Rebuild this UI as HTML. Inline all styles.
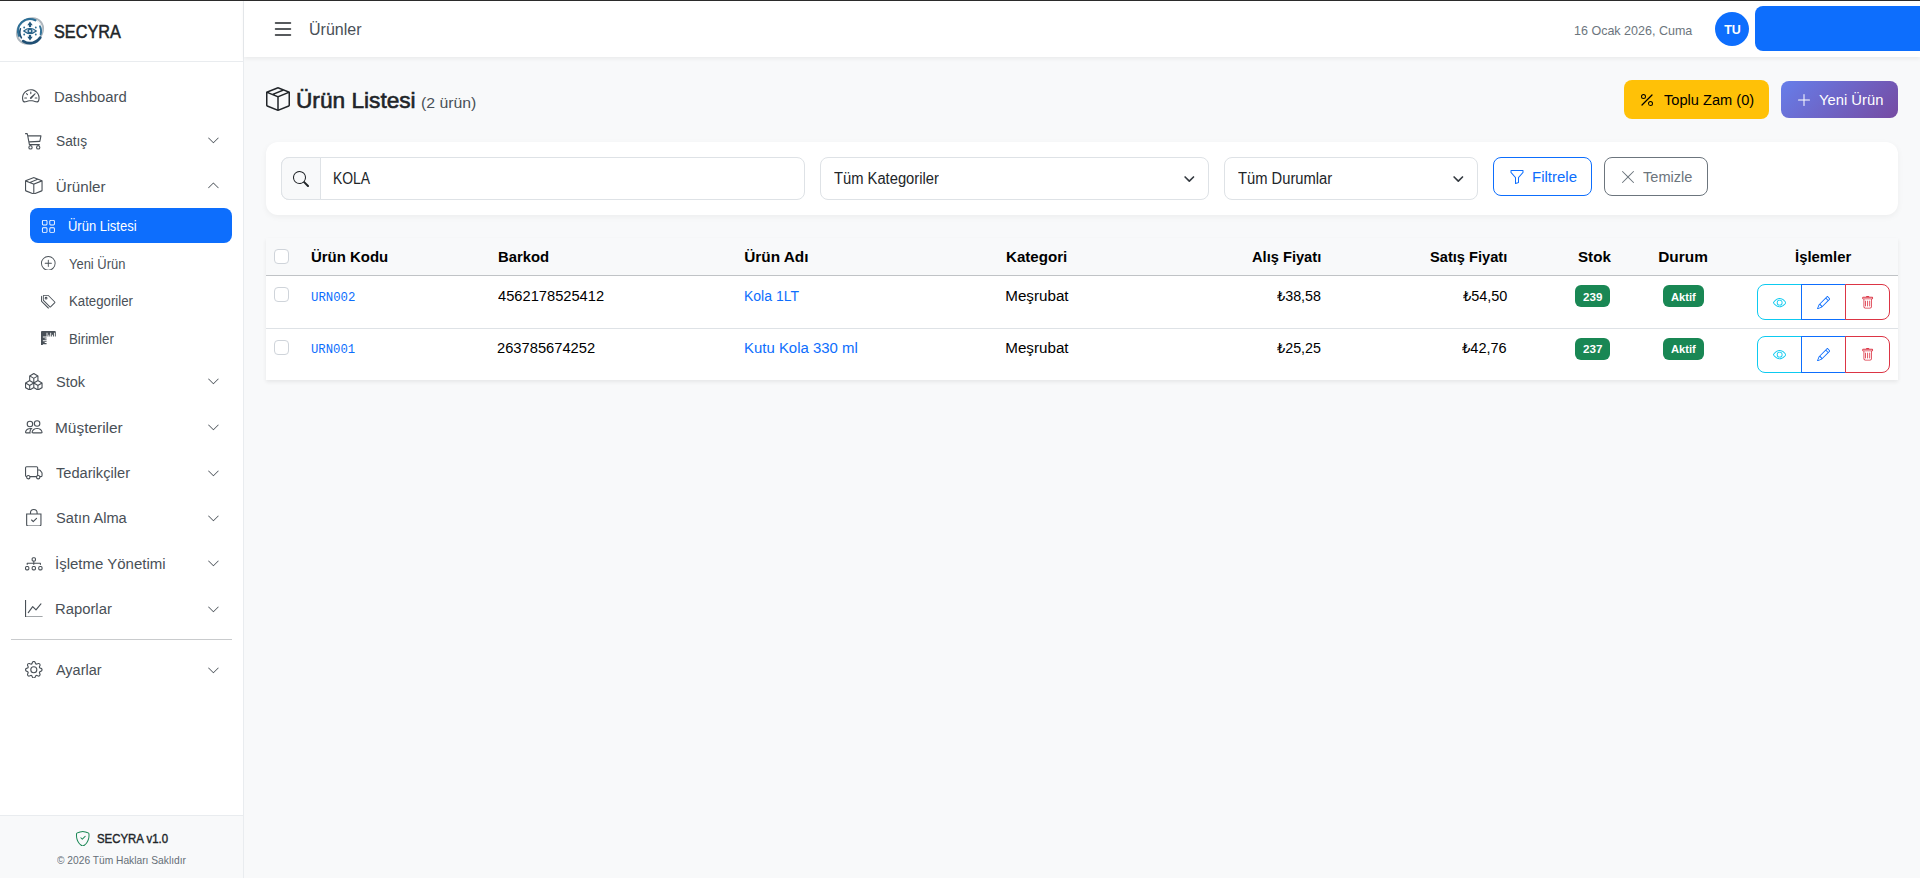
<!DOCTYPE html>
<html lang="tr"><head><meta charset="utf-8"><title>SECYRA - Ürün Listesi</title>
<style>
*{box-sizing:border-box}
html,body{margin:0;padding:0}
body{width:1920px;height:878px;overflow:hidden;position:relative;background:#f8f9fa;font-family:"Liberation Sans","DejaVu Sans",sans-serif;}
.a{position:absolute}
.i{position:absolute;display:block}
.t{position:absolute;white-space:nowrap;line-height:1;margin:0;padding:0;transform-origin:0 0}
.mono{font-family:"Liberation Mono","DejaVu Sans Mono",monospace}
.badge{position:absolute;background:#198754;border-radius:6px;height:22px}
.lira{font-size:.9em}
.cb{position:absolute;width:15px;height:15px;border:1px solid #cfd4da;border-radius:4px;background:#fff}
.ab{position:absolute;height:36px;width:45px;background:#fff;border:1px solid}
</style></head><body>

<div class="a" style="left:0;top:0;width:244px;height:878px;background:#fff;border-right:1px solid #e9ecef"></div>
<div class="a" style="left:0;top:61px;width:243px;height:1px;background:#e9ecef"></div>
<div class="a" style="left:0;top:815px;width:243px;height:63px;background:#f8f9fa;border-top:1px solid #e9ecef"></div>
<div class="a" style="left:11px;top:639px;width:221px;height:1px;background:#c9cbcd"></div>
<div class="a" style="left:30px;top:208px;width:202px;height:35px;background:#0d6efd;border-radius:8px"></div>
<div class="a" style="left:244px;top:0;width:1676px;height:57px;background:#fff;box-shadow:0 2px 4px rgba(0,0,0,.06)"></div>
<div class="a" style="left:0;top:0;width:1920px;height:1px;background:#2b2b2b"></div>
<div class="a" style="left:1715px;top:12px;width:34px;height:34px;border-radius:50%;background:#0d6efd"></div>
<div class="a" style="left:1755px;top:6px;width:175px;height:45px;border-radius:8px;background:#0d6efd"></div>
<div class="a" style="left:1624px;top:80px;width:145px;height:39px;border-radius:8px;background:#ffc107"></div>
<div class="a" style="left:1781px;top:81px;width:117px;height:37px;border-radius:8px;background:linear-gradient(135deg,#667eea 0%,#764ba2 100%)"></div>
<div class="a" style="left:266px;top:142px;width:1632px;height:73px;border-radius:12px;background:#fff;box-shadow:0 2px 6px rgba(0,0,0,.05)"></div>
<div class="a" style="left:281px;top:157px;width:524px;height:43px;border:1px solid #dee2e6;border-radius:8px;background:#fff"></div>
<div class="a" style="left:281px;top:157px;width:40px;height:43px;border:1px solid #dee2e6;border-radius:8px 0 0 8px;background:#f8f9fa"></div>
<div class="a" style="left:820px;top:157px;width:389px;height:43px;border:1px solid #dee2e6;border-radius:8px;background:#fff"></div>
<div class="a" style="left:1224px;top:157px;width:254px;height:43px;border:1px solid #dee2e6;border-radius:8px;background:#fff"></div>
<div class="a" style="left:1493px;top:157px;width:99px;height:39px;border:1px solid #0d6efd;border-radius:8px;background:#fff"></div>
<div class="a" style="left:1604px;top:157px;width:104px;height:39px;border:1px solid #6c757d;border-radius:8px;background:#fff"></div>
<svg class="i" style="left:1181.4px;top:170.5px" width="16" height="16" viewBox="0 0 16 16" fill="none" stroke="#343a40" stroke-width="1.650" stroke-linecap="round" stroke-linejoin="round"><path d="M4.100 6 8.300 10.100 12.500 6"/></svg>
<svg class="i" style="left:1450.4px;top:170.5px" width="16" height="16" viewBox="0 0 16 16" fill="none" stroke="#343a40" stroke-width="1.650" stroke-linecap="round" stroke-linejoin="round"><path d="M4.100 6 8.300 10.100 12.500 6"/></svg>
<div class="a" style="left:266px;top:238px;width:1632px;height:142px;background:#fff;box-shadow:0 2px 4px rgba(0,0,0,.075)"></div>
<div class="a" style="left:266px;top:238px;width:1632px;height:37px;background:#f8f9fa"></div>
<div class="a" style="left:266px;top:275px;width:1632px;height:1px;background:#c0c3c6"></div>
<div class="a" style="left:266px;top:328px;width:1632px;height:1px;background:#dee2e6"></div>
<div class="cb" style="left:274px;top:249px"></div>
<div class="cb" style="left:274px;top:287px"></div>
<div class="cb" style="left:274px;top:340px"></div>
<div class="badge" style="left:1575px;top:285px;width:35px"></div>
<div class="badge" style="left:1663px;top:285px;width:41px"></div>
<div class="badge" style="left:1575px;top:338px;width:35px"></div>
<div class="badge" style="left:1663px;top:338px;width:41px"></div>
<div class="ab" style="left:1757px;top:284px;height:36px;border-color:#0dcaf0;border-radius:8px 0 0 8px"></div>
<div class="ab" style="left:1801px;top:284px;height:36px;border-color:#0d6efd"></div>
<div class="ab" style="left:1845px;top:284px;height:36px;border-color:#dc3545;border-radius:0 8px 8px 0"></div>
<svg class="i" style="left:1772.5px;top:295.75px" width="13.3" height="13.3" viewBox="0 0 16 16" fill="#0dcaf0"><path d="M16 8s-3-5.5-8-5.5S0 8 0 8s3 5.5 8 5.5S16 8 16 8M1.173 8a13 13 0 0 1 1.66-2.043C4.12 4.668 5.88 3.5 8 3.5s3.879 1.168 5.168 2.457A13 13 0 0 1 14.828 8q-.086.13-.195.288c-.335.48-.83 1.12-1.465 1.755C11.879 11.332 10.119 12.5 8 12.5s-3.879-1.168-5.168-2.457A13 13 0 0 1 1.172 8z"/><path d="M8 5.5a2.5 2.5 0 1 0 0 5 2.5 2.5 0 0 0 0-5M4.5 8a3.5 3.5 0 1 1 7 0 3.5 3.5 0 0 1-7 0"/></svg>
<svg class="i" style="left:1816.7px;top:295.8px" width="13.3" height="13.3" viewBox="0 0 16 16" fill="#0d6efd"><path d="M12.146.146a.5.5 0 0 1 .708 0l3 3a.5.5 0 0 1 0 .708l-10 10a.5.5 0 0 1-.168.11l-5 2a.5.5 0 0 1-.65-.65l2-5a.5.5 0 0 1 .11-.168zM11.207 2.5 13.5 4.793 14.793 3.5 12.5 1.207zm1.586 3L10.5 3.207 4 9.707V10h.5a.5.5 0 0 1 .5.5v.5h.5a.5.5 0 0 1 .5.5v.5h.293zm-9.761 5.175-.106.106-1.528 3.821 3.821-1.528.106-.106A.5.5 0 0 1 5 12.5V12h-.5a.5.5 0 0 1-.5-.5V11h-.5a.5.5 0 0 1-.468-.325"/></svg>
<svg class="i" style="left:1860.85px;top:296px" width="13.3" height="13.3" viewBox="0 0 16 16" fill="#dc3545"><path d="M5.5 5.5A.5.5 0 0 1 6 6v6a.5.5 0 0 1-1 0V6a.5.5 0 0 1 .5-.5m2.5 0a.5.5 0 0 1 .5.5v6a.5.5 0 0 1-1 0V6a.5.5 0 0 1 .5-.5m3 .5a.5.5 0 0 0-1 0v6a.5.5 0 0 0 1 0z"/><path d="M14.5 3a1 1 0 0 1-1 1H13v9a2 2 0 0 1-2 2H5a2 2 0 0 1-2-2V4h-.5a1 1 0 0 1-1-1V2a1 1 0 0 1 1-1H6a1 1 0 0 1 1-1h2a1 1 0 0 1 1 1h3.5a1 1 0 0 1 1 1zM4.118 4 4 4.059V13a1 1 0 0 0 1 1h6a1 1 0 0 0 1-1V4.059L11.882 4zM2.5 3h11V2h-11z"/></svg>
<div class="ab" style="left:1757px;top:336px;height:37px;border-color:#0dcaf0;border-radius:8px 0 0 8px"></div>
<div class="ab" style="left:1801px;top:336px;height:37px;border-color:#0d6efd"></div>
<div class="ab" style="left:1845px;top:336px;height:37px;border-color:#dc3545;border-radius:0 8px 8px 0"></div>
<svg class="i" style="left:1772.5px;top:347.75px" width="13.3" height="13.3" viewBox="0 0 16 16" fill="#0dcaf0"><path d="M16 8s-3-5.5-8-5.5S0 8 0 8s3 5.5 8 5.5S16 8 16 8M1.173 8a13 13 0 0 1 1.66-2.043C4.12 4.668 5.88 3.5 8 3.5s3.879 1.168 5.168 2.457A13 13 0 0 1 14.828 8q-.086.13-.195.288c-.335.48-.83 1.12-1.465 1.755C11.879 11.332 10.119 12.5 8 12.5s-3.879-1.168-5.168-2.457A13 13 0 0 1 1.172 8z"/><path d="M8 5.5a2.5 2.5 0 1 0 0 5 2.5 2.5 0 0 0 0-5M4.5 8a3.5 3.5 0 1 1 7 0 3.5 3.5 0 0 1-7 0"/></svg>
<svg class="i" style="left:1816.7px;top:347.8px" width="13.3" height="13.3" viewBox="0 0 16 16" fill="#0d6efd"><path d="M12.146.146a.5.5 0 0 1 .708 0l3 3a.5.5 0 0 1 0 .708l-10 10a.5.5 0 0 1-.168.11l-5 2a.5.5 0 0 1-.65-.65l2-5a.5.5 0 0 1 .11-.168zM11.207 2.5 13.5 4.793 14.793 3.5 12.5 1.207zm1.586 3L10.5 3.207 4 9.707V10h.5a.5.5 0 0 1 .5.5v.5h.5a.5.5 0 0 1 .5.5v.5h.293zm-9.761 5.175-.106.106-1.528 3.821 3.821-1.528.106-.106A.5.5 0 0 1 5 12.5V12h-.5a.5.5 0 0 1-.5-.5V11h-.5a.5.5 0 0 1-.468-.325"/></svg>
<svg class="i" style="left:1860.85px;top:348px" width="13.3" height="13.3" viewBox="0 0 16 16" fill="#dc3545"><path d="M5.5 5.5A.5.5 0 0 1 6 6v6a.5.5 0 0 1-1 0V6a.5.5 0 0 1 .5-.5m2.5 0a.5.5 0 0 1 .5.5v6a.5.5 0 0 1-1 0V6a.5.5 0 0 1 .5-.5m3 .5a.5.5 0 0 0-1 0v6a.5.5 0 0 0 1 0z"/><path d="M14.5 3a1 1 0 0 1-1 1H13v9a2 2 0 0 1-2 2H5a2 2 0 0 1-2-2V4h-.5a1 1 0 0 1-1-1V2a1 1 0 0 1 1-1H6a1 1 0 0 1 1-1h2a1 1 0 0 1 1 1h3.5a1 1 0 0 1 1 1zM4.118 4 4 4.059V13a1 1 0 0 0 1 1h6a1 1 0 0 0 1-1V4.059L11.882 4zM2.5 3h11V2h-11z"/></svg>
<svg class="i" style="left:270.5px;top:16.5px" width="24" height="24" viewBox="0 0 16 16" fill="#212529"><path fill-rule="evenodd" d="M2.5 12a.5.5 0 0 1 .5-.5h10a.5.5 0 0 1 0 1H3a.5.5 0 0 1-.5-.5m0-4a.5.5 0 0 1 .5-.5h10a.5.5 0 0 1 0 1H3a.5.5 0 0 1-.5-.5m0-4a.5.5 0 0 1 .5-.5h10a.5.5 0 0 1 0 1H3a.5.5 0 0 1-.5-.5"/></svg>
<svg class="i" style="left:22.3px;top:86.8px" width="17.6" height="17.6" viewBox="0 0 16 16" fill="#495057"><path d="M8 4a.5.5 0 0 1 .5.5V6a.5.5 0 0 1-1 0V4.500A.5.5 0 0 1 8 4M3.732 5.732a.5.5 0 0 1 .707 0l.915.914a.5.5 0 1 1-.708.708l-.914-.915a.5.5 0 0 1 0-.707M2 10a.5.5 0 0 1 .5-.5h1.586a.5.5 0 0 1 0 1H2.5A.5.5 0 0 1 2 10m9.500 0a.5.5 0 0 1 .5-.5h1.500a.5.5 0 0 1 0 1H12a.5.5 0 0 1-.5-.5m.754-4.246a.39.39 0 0 0-.527-.02L7.547 9.310a.91.91 0 1 0 1.302 1.258l3.434-4.297a.39.39 0 0 0-.029-.518z"/><path fill-rule="evenodd" d="M0 10a8 8 0 1 1 15.547 2.661c-.442 1.253-1.845 1.602-2.932 1.250C11.309 13.488 9.475 13 8 13c-1.474 0-3.310.488-4.615.911-1.087.352-2.490.003-2.932-1.250A8 8 0 0 1 0 10m8-7a7 7 0 0 0-6.603 9.329c.203.575.923.876 1.680.630C4.397 12.533 6.358 12 8 12s3.604.532 4.923.960c.757.245 1.477-.056 1.680-.631A7 7 0 0 0 8 3"/></svg>
<svg class="i" style="left:25.3px;top:132px" width="17.6" height="17.6" viewBox="0 0 16 16" fill="#495057"><path d="M0 1.5A.5.5 0 0 1 .5 1H2a.5.5 0 0 1 .485.379L2.89 3H14.5a.5.5 0 0 1 .49.598l-1 5a.5.5 0 0 1-.465.401l-9.397.472L4.415 11H13a.5.5 0 0 1 0 1H4a.5.5 0 0 1-.491-.408L2.01 3.607 1.61 2H.5a.5.5 0 0 1-.5-.5M3.102 4l.84 4.479 9.144-.459L13.89 4zM5 12a2 2 0 1 0 0 4 2 2 0 0 0 0-4m7 0a2 2 0 1 0 0 4 2 2 0 0 0 0-4m-7 1a1 1 0 1 1 0 2 1 1 0 0 1 0-2m7 0a1 1 0 1 1 0 2 1 1 0 0 1 0-2"/></svg>
<svg class="i" style="left:25.3px;top:176.7px" width="17.6" height="17.6" viewBox="0 0 16 16" fill="#495057"><path d="M8.186 1.113a.5.5 0 0 0-.372 0L1.846 3.5l2.404.961L10.404 2zm3.564 1.426L5.596 5 8 5.961 14.154 3.5zm3.250 1.700-6.500 2.600v7.922l6.500-2.600V4.240zM7.500 14.762V6.838L1 4.239v7.923zM7.443.184a1.500 1.500 0 0 1 1.114 0l7.129 2.852A.5.5 0 0 1 16 3.500v8.662a1 1 0 0 1-.629.928l-7.185 2.874a.5.5 0 0 1-.372 0L.630 13.090a1 1 0 0 1-.630-.928V3.500a.5.5 0 0 1 .314-.464z"/></svg>
<svg class="i" style="left:41px;top:218.7px" width="14.8" height="14.8" viewBox="0 0 16 16" fill="#fff"><path d="M1 2.500A1.500 1.500 0 0 1 2.500 1h3A1.500 1.500 0 0 1 7 2.500v3A1.500 1.500 0 0 1 5.500 7h-3A1.500 1.500 0 0 1 1 5.500zM2.500 2a.5.5 0 0 0-.5.5v3a.5.5 0 0 0 .5.5h3a.5.5 0 0 0 .5-.5v-3a.5.5 0 0 0-.5-.5zm6.500.5A1.500 1.500 0 0 1 10.500 1h3A1.500 1.500 0 0 1 15 2.500v3A1.500 1.500 0 0 1 13.500 7h-3A1.500 1.500 0 0 1 9 5.500zm1.500-.5a.5.5 0 0 0-.5.5v3a.5.5 0 0 0 .5.5h3a.5.5 0 0 0 .5-.5v-3a.5.5 0 0 0-.5-.5zM1 10.500A1.500 1.500 0 0 1 2.500 9h3A1.500 1.500 0 0 1 7 10.500v3A1.500 1.500 0 0 1 5.500 15h-3A1.500 1.500 0 0 1 1 13.500zm1.500-.5a.5.5 0 0 0-.5.5v3a.5.5 0 0 0 .5.5h3a.5.5 0 0 0 .5-.5v-3a.5.5 0 0 0-.5-.5zm6.500.5A1.500 1.500 0 0 1 10.500 9h3a1.500 1.500 0 0 1 1.500 1.500v3a1.500 1.500 0 0 1-1.500 1.500h-3A1.500 1.500 0 0 1 9 13.500zm1.500-.5a.5.5 0 0 0-.5.5v3a.5.5 0 0 0 .5.5h3a.5.5 0 0 0 .5-.5v-3a.5.5 0 0 0-.5-.5z"/></svg>
<svg class="i" style="left:41px;top:255.9px" width="14.6" height="14.6" viewBox="0 0 16 16" fill="#495057"><path d="M8 15A7 7 0 1 1 8 1a7 7 0 0 1 0 14m0 1A8 8 0 1 0 8 0a8 8 0 0 0 0 16"/><path d="M8 4a.5.5 0 0 1 .5.5v3h3a.5.5 0 0 1 0 1h-3v3a.5.5 0 0 1-1 0v-3h-3a.5.5 0 0 1 0-1h3v-3A.5.5 0 0 1 8 4"/></svg>
<svg class="i" style="left:41px;top:293.9px" width="14.8" height="14.8" viewBox="0 0 16 16" fill="#495057"><path d="M3 2v4.586l7 7L14.586 9l-7-7zM2 2a1 1 0 0 1 1-1h4.586a1 1 0 0 1 .707.293l7 7a1 1 0 0 1 0 1.414l-4.586 4.586a1 1 0 0 1-1.414 0l-7-7A1 1 0 0 1 2 6.586z"/><path d="M5.500 5a.5.5 0 1 1 0-1 .5.5 0 0 1 0 1m0 1a1.500 1.500 0 1 0 0-3 1.500 1.500 0 0 0 0 3M1 7.086a1 1 0 0 0 .293.707L8.750 15.250l-.043.043a1 1 0 0 1-1.414 0l-7-7A1 1 0 0 1 0 7.586V3a1 1 0 0 1 1-1z"/></svg>
<svg class="i" style="left:41px;top:330.6px" width="14.8" height="14.8" viewBox="0 0 16 16" fill="#495057"><path d="M1 0a1 1 0 0 0-1 1v14a1 1 0 0 0 1 1h5v-1H2v-1h4v-1H4v-1h2v-1H2v-1h4V9H4V8h2V7H2V6h4V2h1v4h1V4h1v2h1V2h1v4h1V4h1v2h1V2h1v4h1V1a1 1 0 0 0-1-1z"/></svg>
<svg class="i" style="left:25.3px;top:372.9px" width="17.6" height="17.6" viewBox="0 0 16 16" fill="#495057"><path d="M7.752.066a.5.5 0 0 1 .496 0l3.750 2.143a.5.5 0 0 1 .252.434v3.995l3.498 2A.5.5 0 0 1 16 9.070v4.286a.5.5 0 0 1-.252.434l-3.750 2.143a.5.5 0 0 1-.496 0l-3.502-2-3.502 2.001a.5.5 0 0 1-.496 0l-3.750-2.143A.5.5 0 0 1 0 13.357V9.071a.5.5 0 0 1 .252-.434L3.750 6.638V2.643a.5.5 0 0 1 .252-.434zM4.250 7.504 1.508 9.071l2.742 1.567 2.742-1.567zM7.500 9.933l-2.750 1.571v3.134l2.750-1.571zm1 3.134 2.750 1.571v-3.134L8.500 9.933zm.508-3.996 2.742 1.567 2.742-1.567-2.742-1.567zm2.242-2.433V3.504L8.500 5.076V8.210zM7.500 8.210V5.076L4.750 3.504v3.134zM5.258 2.643 8 4.210l2.742-1.567L8 1.076zM15 9.933l-2.750 1.571v3.134L15 13.067zM3.750 14.638v-3.134L1 9.933v3.134z"/></svg>
<svg class="i" style="left:25.3px;top:418.2px" width="17.6" height="17.6" viewBox="0 0 16 16" fill="#495057"><path d="M15 14s1 0 1-1-1-4-5-4-5 3-5 4 1 1 1 1zm-7.978-1L7 12.996c.001-.264.167-1.030.760-1.720C8.312 10.629 9.282 10 11 10c1.717 0 2.687.630 3.240 1.276.593.690.758 1.457.760 1.720l-.008.002-.014.002zM11 7a2 2 0 1 0 0-4 2 2 0 0 0 0 4m3-2a3 3 0 1 1-6 0 3 3 0 0 1 6 0M6.936 9.280a6 6 0 0 0-1.230-.247A7 7 0 0 0 5 9c-4 0-5 3-5 4q0 1 1 1h4.216A2.240 2.240 0 0 1 5 13c0-1.010.377-2.042 1.090-2.904.243-.294.526-.569.846-.816M4.920 10A5.500 5.500 0 0 0 4 13H1c0-.260.164-1.030.760-1.724.545-.636 1.492-1.256 3.160-1.275ZM1.500 5.500a3 3 0 1 1 6 0 3 3 0 0 1-6 0m3-2a2 2 0 1 0 0 4 2 2 0 0 0 0-4"/></svg>
<svg class="i" style="left:25.3px;top:463.8px" width="17.6" height="17.6" viewBox="0 0 16 16" fill="#495057"><path d="M0 3.500A1.500 1.500 0 0 1 1.500 2h9A1.500 1.500 0 0 1 12 3.500V5h1.020a1.500 1.500 0 0 1 1.170.563l1.481 1.850a1.500 1.500 0 0 1 .329.938V10.500a1.500 1.500 0 0 1-1.500 1.500H14a2 2 0 1 1-4 0H5a2 2 0 1 1-3.998-.085A1.500 1.500 0 0 1 0 10.500zm1.294 7.456A2 2 0 0 1 4.732 11h5.536a2 2 0 0 1 .732-.732V3.500a.5.5 0 0 0-.5-.5h-9a.5.5 0 0 0-.5.500v7a.5.5 0 0 0 .294.456M12 10a2 2 0 0 1 1.732 1h.768a.5.5 0 0 0 .5-.5V8.350a.5.5 0 0 0-.110-.312l-1.480-1.850A.5.5 0 0 0 13.020 6H12zm-9 1a1 1 0 1 0 0 2 1 1 0 0 0 0-2m9 0a1 1 0 1 0 0 2 1 1 0 0 0 0-2"/></svg>
<svg class="i" style="left:25.3px;top:508.5px" width="17.6" height="17.6" viewBox="0 0 16 16" fill="#495057"><path fill-rule="evenodd" d="M10.854 8.146a.5.5 0 0 1 0 .708l-3 3a.5.5 0 0 1-.708 0l-1.500-1.500a.5.5 0 0 1 .708-.708L7.500 10.793l2.646-2.647a.5.5 0 0 1 .708 0"/><path d="M8 1a2.500 2.500 0 0 1 2.500 2.500V4h-5v-.5A2.500 2.500 0 0 1 8 1m3.500 3v-.5a3.500 3.500 0 1 0-7 0V4H1v10a2 2 0 0 0 2 2h10a2 2 0 0 0 2-2V4zM2 5h12v9a1 1 0 0 1-1 1H3a1 1 0 0 1-1-1z"/></svg>
<svg class="i" style="left:25.3px;top:554.7px" width="17.6" height="17.6" viewBox="0 0 16 16" fill="#495057"><path fill-rule="evenodd" d="M6 3.500A1.500 1.500 0 0 1 7.500 2h1A1.500 1.500 0 0 1 10 3.500v1A1.500 1.500 0 0 1 8.500 6v1H14a.5.5 0 0 1 .5.5v1a.5.5 0 0 1-1 0V8h-5v.5a.5.5 0 0 1-1 0V8h-5v.5a.5.5 0 0 1-1 0v-1A.5.5 0 0 1 2 7h5.500V6A1.500 1.500 0 0 1 6 4.500zM8.500 5a.5.5 0 0 0 .5-.5v-1a.5.5 0 0 0-.5-.5h-1a.5.5 0 0 0-.5.5v1a.5.5 0 0 0 .5.5zM0 11.500A1.500 1.500 0 0 1 1.500 10h1A1.500 1.500 0 0 1 4 11.500v1A1.500 1.500 0 0 1 2.500 14h-1A1.500 1.500 0 0 1 0 12.500zm1.500-.5a.5.5 0 0 0-.5.5v1a.5.5 0 0 0 .5.5h1a.5.5 0 0 0 .5-.5v-1a.5.5 0 0 0-.5-.5zm4.500.5A1.500 1.500 0 0 1 7.500 10h1a1.500 1.500 0 0 1 1.500 1.500v1A1.500 1.500 0 0 1 8.500 14h-1A1.500 1.500 0 0 1 6 12.500zm1.500-.5a.5.5 0 0 0-.5.5v1a.5.5 0 0 0 .5.5h1a.5.5 0 0 0 .5-.5v-1a.5.5 0 0 0-.5-.5zm4.500.5a1.500 1.500 0 0 1 1.500-1.500h1a1.500 1.500 0 0 1 1.500 1.500v1a1.500 1.500 0 0 1-1.500 1.500h-1a1.500 1.500 0 0 1-1.500-1.500zm1.500-.5a.5.5 0 0 0-.5.5v1a.5.5 0 0 0 .5.5h1a.5.5 0 0 0 .5-.5v-1a.5.5 0 0 0-.5-.5z"/></svg>
<svg class="i" style="left:25.3px;top:599.7px" width="17.6" height="17.6" viewBox="0 0 16 16" fill="#495057"><path fill-rule="evenodd" d="M0 0h1v15h15v1H0zm14.817 3.113a.5.5 0 0 1 .070.704l-4.500 5.500a.5.5 0 0 1-.740.037L7.060 6.767l-3.656 5.027a.5.5 0 0 1-.808-.588l4-5.500a.5.5 0 0 1 .758-.060l2.609 2.610 4.150-5.073a.5.5 0 0 1 .704-.070"/></svg>
<svg class="i" style="left:25.3px;top:660.7px" width="17.6" height="17.6" viewBox="0 0 16 16" fill="#495057"><path d="M8 4.754a3.246 3.246 0 1 0 0 6.492 3.246 3.246 0 0 0 0-6.492M5.754 8a2.246 2.246 0 1 1 4.492 0 2.246 2.246 0 0 1-4.492 0"/><path d="M9.796 1.343c-.527-1.790-3.065-1.790-3.592 0l-.094.319a.873.873 0 0 1-1.255.520l-.292-.160c-1.640-.892-3.433.902-2.540 2.541l.159.292a.873.873 0 0 1-.520 1.255l-.319.094c-1.790.527-1.790 3.065 0 3.592l.319.094a.873.873 0 0 1 .520 1.255l-.160.292c-.892 1.640.901 3.434 2.541 2.540l.292-.159a.873.873 0 0 1 1.255.520l.094.319c.527 1.790 3.065 1.790 3.592 0l.094-.319a.873.873 0 0 1 1.255-.520l.292.160c1.640.893 3.434-.902 2.540-2.541l-.159-.292a.873.873 0 0 1 .520-1.255l.319-.094c1.790-.527 1.790-3.065 0-3.592l-.319-.094a.873.873 0 0 1-.520-1.255l.160-.292c.893-1.640-.902-3.433-2.541-2.540l-.292.159a.873.873 0 0 1-1.255-.520zm-2.633.283c.246-.835 1.428-.835 1.674 0l.094.319a1.873 1.873 0 0 0 2.693 1.115l.291-.160c.764-.415 1.600.420 1.184 1.185l-.159.292a1.873 1.873 0 0 0 1.116 2.692l.318.094c.835.246.835 1.428 0 1.674l-.319.094a1.873 1.873 0 0 0-1.115 2.693l.160.291c.415.764-.420 1.600-1.185 1.184l-.291-.159a1.873 1.873 0 0 0-2.693 1.116l-.094.318c-.246.835-1.428.835-1.674 0l-.094-.319a1.873 1.873 0 0 0-2.692-1.115l-.292.160c-.764.415-1.600-.420-1.184-1.185l.159-.291A1.873 1.873 0 0 0 1.945 8.930l-.319-.094c-.835-.246-.835-1.428 0-1.674l.319-.094A1.873 1.873 0 0 0 3.060 4.377l-.160-.292c-.415-.764.420-1.600 1.185-1.184l.292.159a1.873 1.873 0 0 0 2.692-1.115z"/></svg>
<svg class="i" style="left:207.4px;top:134.0px" width="12.8" height="12.8" viewBox="0 0 16 16" fill="#495057"><path fill-rule="evenodd" d="M1.646 4.646a.5.5 0 0 1 .708 0L8 10.293l5.646-5.647a.5.5 0 0 1 .708.708l-6 6a.5.5 0 0 1-.708 0l-6-6a.5.5 0 0 1 0-.708"/></svg>
<svg class="i" style="left:207.4px;top:375.3px" width="12.8" height="12.8" viewBox="0 0 16 16" fill="#495057"><path fill-rule="evenodd" d="M1.646 4.646a.5.5 0 0 1 .708 0L8 10.293l5.646-5.647a.5.5 0 0 1 .708.708l-6 6a.5.5 0 0 1-.708 0l-6-6a.5.5 0 0 1 0-.708"/></svg>
<svg class="i" style="left:207.4px;top:421.1px" width="12.8" height="12.8" viewBox="0 0 16 16" fill="#495057"><path fill-rule="evenodd" d="M1.646 4.646a.5.5 0 0 1 .708 0L8 10.293l5.646-5.647a.5.5 0 0 1 .708.708l-6 6a.5.5 0 0 1-.708 0l-6-6a.5.5 0 0 1 0-.708"/></svg>
<svg class="i" style="left:207.4px;top:466.5px" width="12.8" height="12.8" viewBox="0 0 16 16" fill="#495057"><path fill-rule="evenodd" d="M1.646 4.646a.5.5 0 0 1 .708 0L8 10.293l5.646-5.647a.5.5 0 0 1 .708.708l-6 6a.5.5 0 0 1-.708 0l-6-6a.5.5 0 0 1 0-.708"/></svg>
<svg class="i" style="left:207.4px;top:511.9px" width="12.8" height="12.8" viewBox="0 0 16 16" fill="#495057"><path fill-rule="evenodd" d="M1.646 4.646a.5.5 0 0 1 .708 0L8 10.293l5.646-5.647a.5.5 0 0 1 .708.708l-6 6a.5.5 0 0 1-.708 0l-6-6a.5.5 0 0 1 0-.708"/></svg>
<svg class="i" style="left:207.4px;top:557.3px" width="12.8" height="12.8" viewBox="0 0 16 16" fill="#495057"><path fill-rule="evenodd" d="M1.646 4.646a.5.5 0 0 1 .708 0L8 10.293l5.646-5.647a.5.5 0 0 1 .708.708l-6 6a.5.5 0 0 1-.708 0l-6-6a.5.5 0 0 1 0-.708"/></svg>
<svg class="i" style="left:207.4px;top:602.7px" width="12.8" height="12.8" viewBox="0 0 16 16" fill="#495057"><path fill-rule="evenodd" d="M1.646 4.646a.5.5 0 0 1 .708 0L8 10.293l5.646-5.647a.5.5 0 0 1 .708.708l-6 6a.5.5 0 0 1-.708 0l-6-6a.5.5 0 0 1 0-.708"/></svg>
<svg class="i" style="left:207.4px;top:663.8px" width="12.8" height="12.8" viewBox="0 0 16 16" fill="#495057"><path fill-rule="evenodd" d="M1.646 4.646a.5.5 0 0 1 .708 0L8 10.293l5.646-5.647a.5.5 0 0 1 .708.708l-6 6a.5.5 0 0 1-.708 0l-6-6a.5.5 0 0 1 0-.708"/></svg>
<svg class="i" style="left:207.4px;top:178.6px" width="12.8" height="12.8" viewBox="0 0 16 16" fill="#495057"><path fill-rule="evenodd" d="M7.646 4.646a.5.5 0 0 1 .708 0l6 6a.5.5 0 0 1-.708.708L8 5.707l-5.646 5.647a.5.5 0 0 1-.708-.708z"/></svg>
<svg class="i" style="left:74.7px;top:830.8px" width="15.5" height="15.5" viewBox="0 0 16 16" fill="#198754"><path d="M5.338 1.590a61 61 0 0 0-2.837.856.48.48 0 0 0-.328.390c-.554 4.157.726 7.190 2.253 9.188a10.700 10.700 0 0 0 2.287 2.233c.346.244.652.420.893.533q.180.085.293.118a1 1 0 0 0 .101.025 1 1 0 0 0 .100-.025q.114-.034.294-.118c.240-.113.547-.290.893-.533a10.700 10.700 0 0 0 2.287-2.233c1.527-1.997 2.807-5.031 2.253-9.188a.48.48 0 0 0-.328-.390c-.651-.213-1.750-.560-2.837-.855C9.552 1.290 8.531 1.067 8 1.067c-.530 0-1.552.223-2.662.524zM5.072.560C6.157.265 7.310 0 8 0s1.843.265 2.928.560c1.110.300 2.229.655 2.887.870a1.540 1.540 0 0 1 1.044 1.262c.596 4.477-.787 7.795-2.465 9.990a11.800 11.800 0 0 1-2.517 2.453 7 7 0 0 1-1.048.625c-.280.132-.581.240-.829.240s-.548-.108-.829-.240a7 7 0 0 1-1.048-.625 11.800 11.800 0 0 1-2.517-2.453C1.928 10.487.545 7.169 1.141 2.692A1.540 1.540 0 0 1 2.185 1.430 63 63 0 0 1 5.072.560"/><path d="M10.854 5.146a.5.5 0 0 1 0 .708l-3 3a.5.5 0 0 1-.708 0l-1.500-1.500a.5.5 0 1 1 .708-.708L7.500 7.793l2.646-2.647a.5.5 0 0 1 .708 0"/></svg>
<svg class="i" style="left:266px;top:87px" width="24" height="24" viewBox="0 0 16 16" fill="#212529"><path d="M8.186 1.113a.5.5 0 0 0-.372 0L1.846 3.5l2.404.961L10.404 2zm3.564 1.426L5.596 5 8 5.961 14.154 3.5zm3.250 1.700-6.500 2.600v7.922l6.500-2.600V4.240zM7.500 14.762V6.838L1 4.239v7.923zM7.443.184a1.500 1.500 0 0 1 1.114 0l7.129 2.852A.5.5 0 0 1 16 3.500v8.662a1 1 0 0 1-.629.928l-7.185 2.874a.5.5 0 0 1-.372 0L.630 13.090a1 1 0 0 1-.630-.928V3.500a.5.5 0 0 1 .314-.464z"/></svg>
<svg class="i" style="left:1639.4px;top:91.5px" width="16" height="16" viewBox="0 0 16 16" fill="#000"><path d="M13.442 2.558a.625.625 0 0 1 0 .884l-10 10a.625.625 0 1 1-.884-.884l10-10a.625.625 0 0 1 .884 0M4.5 6a1.5 1.5 0 1 1 0-3 1.5 1.5 0 0 1 0 3m0 1a2.5 2.5 0 1 0 0-5 2.5 2.5 0 0 0 0 5m7 6a1.5 1.5 0 1 1 0-3 1.5 1.5 0 0 1 0 3m0 1a2.5 2.5 0 1 0 0-5 2.5 2.5 0 0 0 0 5"/></svg>
<svg class="i" style="left:1795.8px;top:91.5px" width="16" height="16" viewBox="0 0 16 16" fill="#fff"><path fill-rule="evenodd" d="M8 2a.5.5 0 0 1 .5.5v5h5a.5.5 0 0 1 0 1h-5v5a.5.5 0 0 1-1 0v-5h-5a.5.5 0 0 1 0-1h5v-5A.5.5 0 0 1 8 2"/></svg>
<svg class="i" style="left:293px;top:171px" width="16" height="16" viewBox="0 0 16 16" fill="#212529"><path d="M11.742 10.344a6.5 6.5 0 1 0-1.397 1.398h-.001q.044.06.098.115l3.85 3.85a1 1 0 0 0 1.415-1.414l-3.85-3.85a1 1 0 0 0-.115-.1zM12 6.5a5.5 5.5 0 1 1-11 0 5.5 5.5 0 0 1 11 0"/></svg>
<svg class="i" style="left:1509px;top:169px" width="16" height="16" viewBox="0 0 16 16" fill="#0d6efd"><path d="M1.5 1.5A.5.5 0 0 1 2 1h12a.5.5 0 0 1 .5.5v2a.5.5 0 0 1-.128.334L10 8.692V13.5a.5.5 0 0 1-.342.474l-3 1A.5.5 0 0 1 6 14.5V8.692L1.628 3.834A.5.5 0 0 1 1.5 3.5zm1 .5v1.308l4.372 4.858A.5.5 0 0 1 7 8.5v5.306l2-.666V8.5a.5.5 0 0 1 .128-.334L13.5 3.308V2z"/></svg>
<svg class="i" style="left:1619.6px;top:168.5px" width="16" height="16" viewBox="0 0 16 16" fill="#6c757d"><path d="M2.146 2.854a.5.5 0 1 1 .708-.708L8 7.293l5.146-5.147a.5.5 0 0 1 .708.708L8.707 8l5.147 5.146a.5.5 0 0 1-.708.708L8 8.707l-5.146 5.147a.5.5 0 0 1-.708-.708L7.293 8z"/></svg>
<svg class="i" style="left:15px;top:15.500px" width="30" height="30" viewBox="0 0 30 30">
<ellipse cx="15" cy="15" rx="14" ry="11.600" transform="rotate(-40 15 15)" fill="none" stroke="#aeb6bd" stroke-width="2"/>
<ellipse cx="15" cy="15" rx="12.600" ry="11" transform="rotate(-40 15 15)" fill="#fff" stroke="#e3e6e9" stroke-width=".9"/>
<path d="M4 19.800A12 12 0 0 1 20.400 4.300" fill="none" stroke="#2d6f96" stroke-width="2.200" stroke-linecap="round"/>
<path d="M24.900 10.200A11 11 0 0 1 25.600 18.600" fill="none" stroke="#2d6f96" stroke-width="1.800" stroke-linecap="round"/>
<path d="M25.300 21.600A12.200 12.200 0 0 1 8.200 25.100" fill="none" stroke="#1f4f74" stroke-width="2.700" stroke-linecap="round"/>
<path d="M5.400 12.800A10.500 10.500 0 0 0 6.400 21.800" fill="none" stroke="#1f4f74" stroke-width="1.600" stroke-linecap="round"/>
<path d="M8.700 15q6.300-5.200 12.600 0q-6.300 5.200-12.600 0z" fill="#d5e2ec" stroke="#2a6389" stroke-width="1.100"/>
<circle cx="15" cy="15" r="2.500" fill="#2a6389"/><circle cx="15" cy="15" r="1" fill="#fff"/>
<path d="M15 7.800v3.300M15 18.900v3.300" stroke="#24587d" stroke-width="2.200"/>
<path d="M12.300 9.200 15 5.600l2.700 3.600zM12.300 20.800 15 24.400l2.700-3.600z" fill="#24587d"/>
<g fill="#2f6f93"><circle cx="9.200" cy="11.500" r=".95"/><circle cx="20.800" cy="11.500" r=".95"/><circle cx="9.200" cy="18.500" r=".95"/><circle cx="20.800" cy="18.500" r=".95"/></g>
</svg>
<span id="brand" class="t" style="left:54.00px;top:24.01px;font-size:17.6px;color:#212529;-webkit-text-stroke:0.5px #212529;transform:scaleX(0.9229)">SECYRA</span>
<span id="m0" class="t" style="left:54.45px;top:89.01px;font-size:15.2px;color:#495057;transform:scaleX(0.9784)">Dashboard</span>
<span id="m1" class="t" style="left:55.60px;top:133.01px;font-size:15.2px;color:#495057;transform:scaleX(0.9019)">Satış</span>
<span id="m2" class="t" style="left:55.73px;top:179.01px;font-size:15.2px;color:#495057">Ürünler</span>
<span id="s0" class="t" style="left:68.37px;top:220.01px;font-size:13.8px;color:#ffffff;transform:scaleX(0.9409)">Ürün Listesi</span>
<span id="s1" class="t" style="left:69.31px;top:258.01px;font-size:13.8px;color:#495057;transform:scaleX(0.9377)">Yeni Ürün</span>
<span id="s2" class="t" style="left:69.09px;top:295.01px;font-size:13.8px;color:#495057;transform:scaleX(0.9589)">Kategoriler</span>
<span id="s3" class="t" style="left:69.15px;top:333.01px;font-size:13.8px;color:#495057;transform:scaleX(0.9581)">Birimler</span>
<span id="m3" class="t" style="left:55.90px;top:374.01px;font-size:15.2px;color:#495057;transform:scaleX(0.9558)">Stok</span>
<span id="m4" class="t" style="left:55.48px;top:420.01px;font-size:15.2px;color:#495057;transform:scaleX(1.0155)">Müşteriler</span>
<span id="m5" class="t" style="left:56.37px;top:465.01px;font-size:15.2px;color:#495057;transform:scaleX(0.9635)">Tedarikçiler</span>
<span id="m6" class="t" style="left:55.97px;top:510.01px;font-size:15.2px;color:#495057;transform:scaleX(0.9625)">Satın Alma</span>
<span id="m7" class="t" style="left:55.28px;top:556.01px;font-size:15.2px;color:#495057;transform:scaleX(0.9874)">İşletme Yönetimi</span>
<span id="m8" class="t" style="left:55.21px;top:601.01px;font-size:15.2px;color:#495057;transform:scaleX(0.9754)">Raporlar</span>
<span id="m9" class="t" style="left:56.47px;top:662.01px;font-size:15.2px;color:#495057;transform:scaleX(0.9512)">Ayarlar</span>
<span id="f0" class="t" style="left:97.01px;top:833.00px;font-size:12.4px;color:#212529;-webkit-text-stroke:0.4px #212529;transform:scaleX(0.9221)">SECYRA v1.0</span>
<span id="f1" class="t" style="left:56.97px;top:855.00px;font-size:10.8px;color:#656e77;transform:scaleX(0.9468)">© 2026 Tüm Hakları Saklıdır</span>
<span id="bc" class="t" style="left:308.55px;top:22.00px;font-size:15.8px;color:#495057;transform:scaleX(1.0150)">Ürünler</span>
<span id="date" class="t" style="left:1574.14px;top:25.01px;font-size:12.8px;color:#6c757d;transform:scaleX(0.9783)">16 Ocak 2026, Cuma</span>
<span id="tu" class="t" style="left:1724.24px;top:24.01px;font-size:12.5px;color:#ffffff;font-weight:700">TU</span>
<span id="title" class="t" style="left:295.78px;top:90.01px;font-size:22.3px;color:#212529;-webkit-text-stroke:0.6px #212529;transform:scaleX(1.0163)">Ürün Listesi</span>
<span id="cnt" class="t" style="left:420.69px;top:95.01px;font-size:15px;color:#495057;transform:scaleX(1.0542)">(2 ürün)</span>
<span id="b1" class="t" style="left:1663.59px;top:92.01px;font-size:15.4px;color:#000000;transform:scaleX(0.9505)">Toplu Zam (0)</span>
<span id="b2" class="t" style="left:1819.08px;top:92.01px;font-size:15.4px;color:#ffffff;transform:scaleX(0.9601)">Yeni Ürün</span>
<span id="q" class="t" style="left:332.91px;top:171.01px;font-size:15.6px;color:#212529;transform:scaleX(0.8923)">KOLA</span>
<span id="sel1" class="t" style="left:834.38px;top:171.01px;font-size:15.6px;color:#212529;transform:scaleX(0.9451)">Tüm Kategoriler</span>
<span id="sel2" class="t" style="left:1238.10px;top:171.01px;font-size:15.6px;color:#212529;transform:scaleX(0.9458)">Tüm Durumlar</span>
<span id="fb1" class="t" style="left:1531.72px;top:169.01px;font-size:15.4px;color:#0d6efd;transform:scaleX(0.9756)">Filtrele</span>
<span id="fb2" class="t" style="left:1642.81px;top:169.01px;font-size:15.4px;color:#6c757d;transform:scaleX(0.9476)">Temizle</span>
<span id="h0" class="t" style="left:311.05px;top:249.01px;font-size:15.4px;color:#000000;font-weight:700;transform:scaleX(0.9715)">Ürün Kodu</span>
<span id="h1" class="t" style="left:497.71px;top:249.01px;font-size:15.4px;color:#000000;font-weight:700;transform:scaleX(0.9653)">Barkod</span>
<span id="h2" class="t" style="left:744.15px;top:249.01px;font-size:15.4px;color:#000000;font-weight:700">Ürün Adı</span>
<span id="h3" class="t" style="left:1005.75px;top:249.01px;font-size:15.4px;color:#000000;font-weight:700;transform:scaleX(0.9822)">Kategori</span>
<span id="h4" class="t" style="left:1252.38px;top:249.01px;font-size:15.4px;color:#000000;font-weight:700;transform:scaleX(0.9518)">Alış Fiyatı</span>
<span id="h5" class="t" style="left:1430.12px;top:249.01px;font-size:15.4px;color:#000000;font-weight:700;transform:scaleX(0.9499)">Satış Fiyatı</span>
<span id="h6" class="t" style="left:1578.49px;top:249.01px;font-size:15.4px;color:#000000;font-weight:700;transform:scaleX(0.9838)">Stok</span>
<span id="h7" class="t" style="left:1658.23px;top:249.01px;font-size:15.4px;color:#000000;font-weight:700">Durum</span>
<span id="h8" class="t" style="left:1795.14px;top:249.01px;font-size:15.4px;color:#000000;font-weight:700;transform:scaleX(0.9662)">İşlemler</span>
<span id="c00" class="t mono" style="left:310.72px;top:292.01px;font-size:12.6px;color:#0d6efd;transform:scaleX(0.9781)">URN002</span>
<span id="c01" class="t" style="left:497.89px;top:288.01px;font-size:15.2px;color:#000000;transform:scaleX(0.9662)">4562178525412</span>
<span id="c02" class="t" style="left:743.87px;top:288.01px;font-size:15.2px;color:#0d6efd;transform:scaleX(0.9213)">Kola 1LT</span>
<span id="c03" class="t" style="left:1005.25px;top:288.01px;font-size:15.2px;color:#000000">Meşrubat</span>
<span id="c04" class="t" style="left:1277.46px;top:288.01px;font-size:15.2px;color:#000000;transform:scaleX(0.9410)"><span class="lira">₺</span>38,58</span>
<span id="c05" class="t" style="left:1462.77px;top:288.01px;font-size:15.2px;color:#000000;transform:scaleX(0.9503)"><span class="lira">₺</span>54,50</span>
<span id="bd00" class="t" style="left:1582.73px;top:292.01px;font-size:11.4px;color:#ffffff;font-weight:700;transform:scaleX(1.0167)">239</span>
<span id="bd01" class="t" style="left:1671.42px;top:292.01px;font-size:11.4px;color:#ffffff;font-weight:700;transform:scaleX(0.9816)">Aktif</span>
<span id="c10" class="t mono" style="left:310.59px;top:344.01px;font-size:12.6px;color:#0d6efd;transform:scaleX(0.9724)">URN001</span>
<span id="c11" class="t" style="left:497.39px;top:340.01px;font-size:15.2px;color:#000000;transform:scaleX(0.9683)">263785674252</span>
<span id="c12" class="t" style="left:743.85px;top:340.01px;font-size:15.2px;color:#0d6efd;transform:scaleX(0.9837)">Kutu Kola 330 ml</span>
<span id="c13" class="t" style="left:1005.25px;top:340.01px;font-size:15.2px;color:#000000">Meşrubat</span>
<span id="c14" class="t" style="left:1277.31px;top:340.01px;font-size:15.2px;color:#000000;transform:scaleX(0.9406)"><span class="lira">₺</span>25,25</span>
<span id="c15" class="t" style="left:1462.47px;top:340.01px;font-size:15.2px;color:#000000;transform:scaleX(0.9556)"><span class="lira">₺</span>42,76</span>
<span id="bd10" class="t" style="left:1582.69px;top:344.01px;font-size:11.4px;color:#ffffff;font-weight:700;transform:scaleX(1.0218)">237</span>
<span id="bd11" class="t" style="left:1671.42px;top:344.01px;font-size:11.4px;color:#ffffff;font-weight:700;transform:scaleX(0.9816)">Aktif</span>
</body></html>
